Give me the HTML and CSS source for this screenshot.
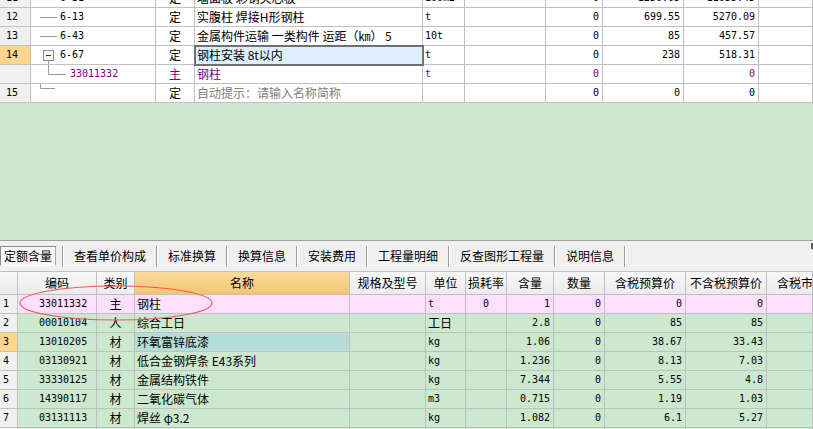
FILE: index.html
```html
<!DOCTYPE html>
<html lang="zh-CN">
<head>
<meta charset="utf-8">
<title>定额含量</title>
<link rel="stylesheet" href="styles.css">
</head>
<body>
<div class="app">
  <div class="top">
    <div class="top-inner">
      <div class="trow">
        <div class="c rn m">11</div>
        <div class="c tree"><svg class="tv" width="29" height="18"><line x1="9" y1="9.5" x2="26" y2="9.5"/></svg><span class="m">6-31</span></div>
        <div class="c ctr">定</div>
        <div class="c l">墙面板 彩钢夹芯板</div>
        <div class="c l m">100m2</div>
        <div class="c"></div>
        <div class="c r m">0</div>
        <div class="c r m">1256.05</div>
        <div class="c r m">11655.45</div>
        <div class="c"></div>
      </div>
      <div class="trow">
        <div class="c rn m">12</div>
        <div class="c tree"><svg class="tv" width="29" height="18"><line x1="9" y1="9.5" x2="26" y2="9.5"/></svg><span class="m">6-13</span></div>
        <div class="c ctr">定</div>
        <div class="c l">实腹柱 焊接H形钢柱</div>
        <div class="c l m">t</div>
        <div class="c"></div>
        <div class="c r m">0</div>
        <div class="c r m">699.55</div>
        <div class="c r m">5270.09</div>
        <div class="c"></div>
      </div>
      <div class="trow">
        <div class="c rn m">13</div>
        <div class="c tree"><svg class="tv" width="29" height="18"><line x1="9" y1="9.5" x2="26" y2="9.5"/></svg><span class="m">6-43</span></div>
        <div class="c ctr">定</div>
        <div class="c l">金属构件运输 一类构件 运距（㎞） 5</div>
        <div class="c l m">10t</div>
        <div class="c"></div>
        <div class="c r m">0</div>
        <div class="c r m">85</div>
        <div class="c r m">457.57</div>
        <div class="c"></div>
      </div>
      <div class="trow">
        <div class="c rn m cur">14</div>
        <div class="c tree"><svg class="tv" width="29" height="18"><rect class="box" x="12.5" y="4.5" width="10" height="10"/><line class="minus" x1="15" y1="9.5" x2="20" y2="9.5"/><line x1="17.5" y1="15" x2="17.5" y2="18"/></svg><span class="m">6-67</span></div>
        <div class="c ctr">定</div>
        <div class="c l sel">钢柱安装 8t以内</div>
        <div class="c l m">t</div>
        <div class="c"></div>
        <div class="c r m">0</div>
        <div class="c r m">238</div>
        <div class="c r m">518.31</div>
        <div class="c"></div>
      </div>
      <div class="trow child">
        <div class="c rn"></div>
        <div class="c tree"><svg class="tv" width="39" height="18"><line x1="17.5" y1="0" x2="17.5" y2="9.5"/><line x1="17.5" y1="9.5" x2="35" y2="9.5"/></svg><span class="m">33011332</span></div>
        <div class="c ctr">主</div>
        <div class="c l">钢柱</div>
        <div class="c l m">t</div>
        <div class="c"></div>
        <div class="c r m">0</div>
        <div class="c r m"></div>
        <div class="c r m">0</div>
        <div class="c"></div>
      </div>
      <div class="trow">
        <div class="c rn m">15</div>
        <div class="c tree"><svg class="tv" width="29" height="18"><line x1="9.5" y1="0" x2="9.5" y2="4.5"/><line x1="9.5" y1="4.5" x2="24" y2="4.5"/></svg></div>
        <div class="c ctr">定</div>
        <div class="c l hint">自动提示：请输入名称简称</div>
        <div class="c"></div>
        <div class="c"></div>
        <div class="c r m">0</div>
        <div class="c r m">0</div>
        <div class="c r m">0</div>
        <div class="c"></div>
      </div>
    </div>
  </div>

  <div class="mid"></div>

  <div class="tabs">
    <div class="tab active">定额含量</div>
    <div class="sep"></div>
    <div class="tab">查看单价构成</div>
    <div class="sep"></div>
    <div class="tab">标准换算</div>
    <div class="sep"></div>
    <div class="tab">换算信息</div>
    <div class="sep"></div>
    <div class="tab">安装费用</div>
    <div class="sep"></div>
    <div class="tab">工程量明细</div>
    <div class="sep"></div>
    <div class="tab">反查图形工程量</div>
    <div class="sep"></div>
    <div class="tab">说明信息</div>
    <div class="sep"></div>
    <div class="tick"></div>
  </div>

  <div class="bottom">
    <div class="brow bhead">
      <div class="c"></div>
      <div class="c ctr">编码</div>
      <div class="c ctr">类别</div>
      <div class="c ctr name-h">名称</div>
      <div class="c ctr">规格及型号</div>
      <div class="c ctr">单位</div>
      <div class="c ctr">损耗率</div>
      <div class="c ctr">含量</div>
      <div class="c ctr">数量</div>
      <div class="c ctr">含税预算价</div>
      <div class="c ctr">不含税预算价</div>
      <div class="c last-h">含税市</div>
    </div>
    <div class="brow pink">
      <div class="c rn2 m">1</div>
      <div class="c code m">33011332</div>
      <div class="c ctr">主</div>
      <div class="c l">钢柱</div>
      <div class="c"></div>
      <div class="c l m">t</div>
      <div class="c ctr m">0</div>
      <div class="c r m">1</div>
      <div class="c r m">0</div>
      <div class="c r m">0</div>
      <div class="c r m">0</div>
      <div class="c"></div>
    </div>
    <div class="brow">
      <div class="c rn2 m">2</div>
      <div class="c code m">00010104</div>
      <div class="c ctr">人</div>
      <div class="c l">综合工日</div>
      <div class="c"></div>
      <div class="c l">工日</div>
      <div class="c"></div>
      <div class="c r m">2.8</div>
      <div class="c r m">0</div>
      <div class="c r m">85</div>
      <div class="c r m">85</div>
      <div class="c"></div>
    </div>
    <div class="brow">
      <div class="c rn2 m cur">3</div>
      <div class="c code m">13010205</div>
      <div class="c ctr">材</div>
      <div class="c l teal">环氧富锌底漆</div>
      <div class="c"></div>
      <div class="c l m">kg</div>
      <div class="c"></div>
      <div class="c r m">1.06</div>
      <div class="c r m">0</div>
      <div class="c r m">38.67</div>
      <div class="c r m">33.43</div>
      <div class="c"></div>
    </div>
    <div class="brow">
      <div class="c rn2 m">4</div>
      <div class="c code m">03130921</div>
      <div class="c ctr">材</div>
      <div class="c l">低合金钢焊条 E43系列</div>
      <div class="c"></div>
      <div class="c l m">kg</div>
      <div class="c"></div>
      <div class="c r m">1.236</div>
      <div class="c r m">0</div>
      <div class="c r m">8.13</div>
      <div class="c r m">7.03</div>
      <div class="c"></div>
    </div>
    <div class="brow">
      <div class="c rn2 m">5</div>
      <div class="c code m">33330125</div>
      <div class="c ctr">材</div>
      <div class="c l">金属结构铁件</div>
      <div class="c"></div>
      <div class="c l m">kg</div>
      <div class="c"></div>
      <div class="c r m">7.344</div>
      <div class="c r m">0</div>
      <div class="c r m">5.55</div>
      <div class="c r m">4.8</div>
      <div class="c"></div>
    </div>
    <div class="brow">
      <div class="c rn2 m">6</div>
      <div class="c code m">14390117</div>
      <div class="c ctr">材</div>
      <div class="c l">二氧化碳气体</div>
      <div class="c"></div>
      <div class="c l m">m3</div>
      <div class="c"></div>
      <div class="c r m">0.715</div>
      <div class="c r m">0</div>
      <div class="c r m">1.19</div>
      <div class="c r m">1.03</div>
      <div class="c"></div>
    </div>
    <div class="brow">
      <div class="c rn2 m">7</div>
      <div class="c code m">03131113</div>
      <div class="c ctr">材</div>
      <div class="c l">焊丝 φ3.2</div>
      <div class="c"></div>
      <div class="c l m">kg</div>
      <div class="c"></div>
      <div class="c r m">1.082</div>
      <div class="c r m">0</div>
      <div class="c r m">6.1</div>
      <div class="c r m">5.27</div>
      <div class="c"></div>
    </div>
    <div class="brow">
      <div class="c rn2 m">8</div>
      <div class="c"></div>
      <div class="c"></div>
      <div class="c"></div>
      <div class="c"></div>
      <div class="c"></div>
      <div class="c"></div>
      <div class="c"></div>
      <div class="c"></div>
      <div class="c"></div>
      <div class="c"></div>
      <div class="c"></div>
    </div>
    <svg class="mark" width="200" height="40" viewBox="0 0 200 40"><ellipse cx="98" cy="20" rx="96" ry="17"/></svg>
  </div>
</div>
</body>
</html>
```

FILE: styles.css
```css
* { box-sizing: border-box; }

html, body {
  margin: 0;
  padding: 0;
}

body {
  width: 813px;
  height: 429px;
  overflow: hidden;
  background: #cce8cf;
  color: #000;
  font-family: "Noto Sans CJK SC", "Noto Sans", sans-serif;
  font-size: 12px;
}

.app {
  width: 813px;
  height: 429px;
  overflow: hidden;
  display: flex;
  flex-direction: column;
}

/* ---------- top grid ---------- */
.top {
  height: 103px;
  flex: none;
  overflow: hidden;
  background: #fff;
}

.top-inner {
  margin-top: -11px;
}

.trow {
  display: grid;
  grid-template-columns: 31px 125px 39px 228px 42px 81px 57px 81px 75px 54px;
  height: 19px;
}

.c {
  display: flex;
  align-items: center;
  height: 19px;
  padding: 0;
  border-right: 1px solid #c0c0c0;
  border-bottom: 1px solid #c0c0c0;
  white-space: nowrap;
  overflow: hidden;
  line-height: 18px;
}

.m {
  font-family: "DejaVu Sans Mono", "Liberation Mono", monospace;
  font-size: 10px;
}

.l { padding-left: 2px; }
.r { justify-content: flex-end; padding-right: 3px; }
.ctr { justify-content: center; }

.rn {
  background: #f0f0f0;
  padding-left: 6px;
}

.cur { background: #ffd68c; }

.tree { padding: 0; overflow: visible; }

.tv {
  flex: none;
  display: block;
}

.tv line {
  stroke: #9a9a9a;
  stroke-width: 1;
}

.tv .box {
  fill: #f6f6f6;
  stroke: #8c8c8c;
  stroke-width: 1;
}

.tv .minus {
  stroke: #303030;
}

.sel {
  background: #ddeeff;
  outline: 2px solid #707070;
  outline-offset: -1px;
  position: relative;
  z-index: 1;
  overflow: visible;
}

.child .c:not(.rn) { color: #800080; }

.hint { color: #808080; }

/* ---------- empty middle area ---------- */
.mid {
  height: 138px;
  flex: none;
  background: #cce8cf;
  border-bottom: 1px solid #a0a0a0;
}

/* ---------- tabs ---------- */
.tabs {
  height: 30px;
  flex: none;
  display: flex;
  align-items: center;
  background: #f0f0f0;
}

.tab {
  padding: 0 10px;
  height: 20px;
  line-height: 20px;
  white-space: nowrap;
}

.tab.active {
  width: 56px;
  padding: 0 2px 0 3px;
  margin-right: 6px;
  background: #f8f8f8;
  border-top: 1px solid #8a8a8a;
  border-left: 1px solid #8a8a8a;
  border-bottom: 1px solid #ffffff;
  border-right: 1px solid #a8a8a8;
  line-height: 18px;
}

.sep {
  width: 2px;
  height: 21px;
  border-left: 1px solid #a0a0a0;
  border-right: 1px solid #ffffff;
}

.tick {
  margin-left: auto;
  align-self: flex-start;
  margin-top: 2px;
  width: 2px;
  height: 6px;
  background: #606060;
}

/* ---------- bottom grid ---------- */
.bottom {
  position: relative;
  flex: none;
  border-top: 1px solid #c0c0c0;
  background: #cce8cf;
}

.brow {
  display: grid;
  grid-template-columns: 18px 79px 38px 215px 76px 40px 41px 47px 51px 81px 81px 46px;
  height: 19px;
}

.bhead {
  height: 23px;
}

.bhead .c {
  height: 23px;
  background: linear-gradient(#f7f7f7, #ececec);
  line-height: 22px;
}

.bhead .name-h {
  background: linear-gradient(#fadb9c, #f2c572);
}

.bhead .last-h {
  padding-left: 10px;
}

.rn2 {
  background: #f0f0f0;
  padding-left: 3px;
}

.rn2.cur { background: #ffd68c; }

.code { padding-left: 21px; }

.pink .c:not(.rn2) { background: #ffdfff; }

.teal { background: #b4ddd7; }

.mark {
  position: absolute;
  left: 18px;
  top: 11px;
  overflow: visible;
  pointer-events: none;
}

.mark ellipse {
  fill: none;
  stroke: #f05858;
  stroke-width: 1.2;
}
```
